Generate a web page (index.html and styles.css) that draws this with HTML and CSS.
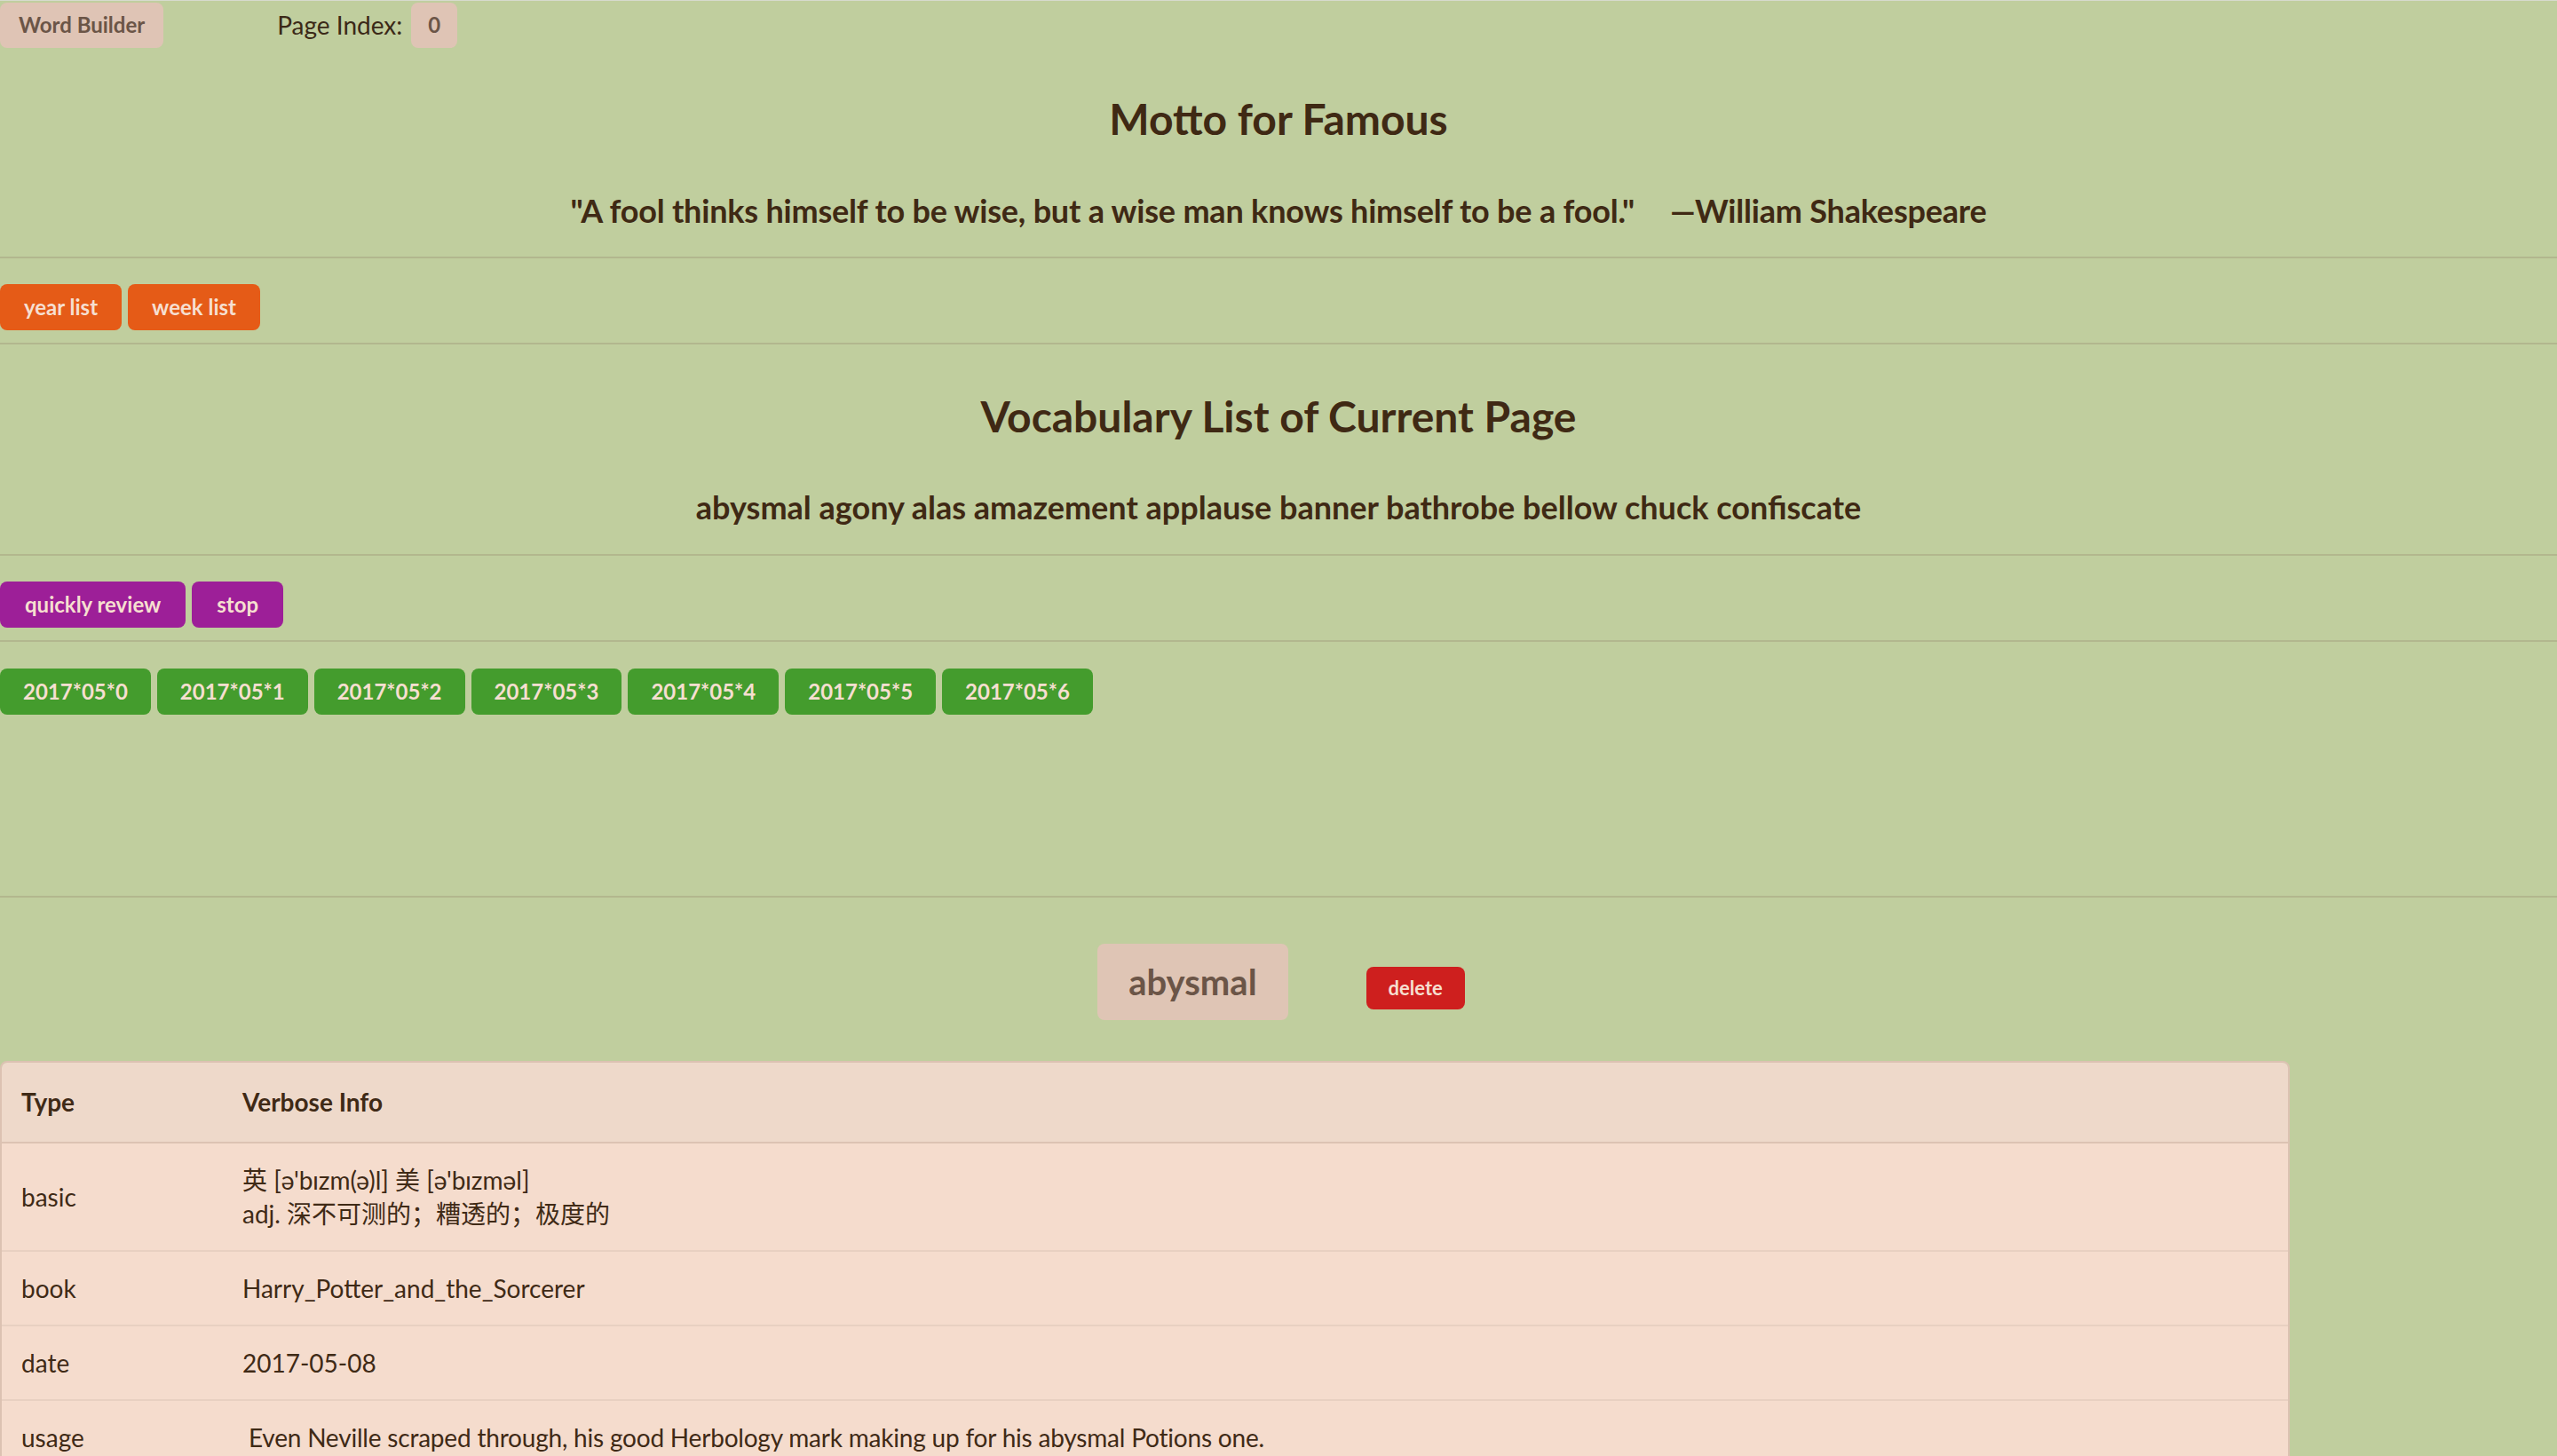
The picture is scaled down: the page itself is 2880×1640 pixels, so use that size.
FILE: index.html
```html
<!DOCTYPE html>
<html lang="en">
<head>
<meta charset="utf-8">
<title>Word Builder</title>
<link rel="stylesheet" href="styles.css">
</head>
<body>
<nav class="nav">
  <span class="brand">Word Builder</span>
  <span class="page-label">Page Index:</span>
  <span class="badge">0</span>
</nav>

<section class="center">
  <h1 class="title title-first">Motto for Famous</h1>
  <p class="lead lead-quote">"A fool thinks himself to be wise, but a wise man knows himself to be a fool."<span class="author">—William Shakespeare</span></p>
</section>
<hr class="rule rule-a">
<div class="btn-row">
  <button class="btn btn-orange">year list</button>
  <button class="btn btn-orange">week list</button>
</div>
<hr class="rule rule-b">

<section class="center">
  <h2 class="title title-second">Vocabulary List of Current Page</h2>
  <p class="lead lead-words">abysmal agony alas amazement applause banner bathrobe bellow chuck confiscate</p>
</section>
<hr class="rule rule-c">
<div class="btn-row">
  <button class="btn btn-purple">quickly review</button>
  <button class="btn btn-purple">stop</button>
</div>
<hr class="rule rule-b">
<div class="btn-row btn-row-dates">
  <button class="btn btn-green">2017*05*0</button>
  <button class="btn btn-green">2017*05*1</button>
  <button class="btn btn-green">2017*05*2</button>
  <button class="btn btn-green">2017*05*3</button>
  <button class="btn btn-green">2017*05*4</button>
  <button class="btn btn-green">2017*05*5</button>
  <button class="btn btn-green">2017*05*6</button>
</div>
<hr class="rule rule-d">

<div class="word-row">
  <span class="word">abysmal</span>
  <button class="btn-delete">delete</button>
</div>

<table class="info">
  <thead>
    <tr><th class="col-type">Type</th><th>Verbose Info</th></tr>
  </thead>
  <tbody>
    <tr><td>basic</td><td>英 [ə'bɪzm(ə)l] 美 [ə'bɪzməl]<br>adj. 深不可测的；糟透的；极度的</td></tr>
    <tr><td>book</td><td>Harry_Potter_and_the_Sorcerer</td></tr>
    <tr><td>date</td><td>2017-05-08</td></tr>
    <tr><td>usage</td><td class="usage">&nbsp;Even Neville scraped through, his good Herbology mark making up for his abysmal Potions one.</td></tr>
  </tbody>
</table>
</body>
</html>
```
FILE: styles.css
```css
html, body {
  margin: 0;
  padding: 0;
}
body {
  background: #c0ce9e;
  border-top: 1px solid #d7dace;
  font-family: Lato, "Noto Sans CJK SC", sans-serif;
  color: #3f2a16;
  min-height: 1640px;
}

/* nav */
.nav {
  display: flex;
  align-items: center;
  padding-top: 1px;
  height: 52px;
}
.brand {
  display: block;
  height: 51px;
  line-height: 50px;
  padding: 0 21px;
  background: #dfc4b5;
  color: #6b5547;
  font-size: 24px;
  font-weight: 700;
  border-radius: 8px;
}
.page-label {
  margin-left: 128px;
  font-size: 28px;
  line-height: 50px;
  color: #3b2917;
}
.badge {
  display: block;
  margin-left: 10px;
  height: 51px;
  line-height: 50px;
  padding: 0 19px;
  background: #dfc4b5;
  color: #6b5547;
  font-size: 24px;
  font-weight: 700;
  border-radius: 8px;
}

/* headings */
.center {
  text-align: center;
}
.title {
  margin: 0;
  font-size: 48px;
  line-height: 58px;
  font-weight: 700;
  color: #3f2914;
}
.title-first {
  margin-top: 51px;
}
.title-second {
  margin-top: 52px;
}
.lead {
  margin: 0;
  font-size: 36px;
  line-height: 44px;
  font-weight: 700;
  color: #3f2914;
}
.lead-quote {
  margin-top: 52px;
  letter-spacing: -0.2px;
}
.lead-words {
  margin-top: 51px;
}
.author {
  margin-left: 40px;
}

/* rules */
.rule {
  border: 0;
  height: 2px;
  margin: 0;
  background: #b2b78e;
}
.rule-a { margin-top: 30px; }
.rule-b { margin-top: 14px; }
.rule-c { margin-top: 31px; }
.rule-d { margin-top: 204px; }

/* buttons */
.btn-row {
  display: flex;
  gap: 7px;
  margin-top: 29px;
}
.btn-row-dates {
  margin-top: 30px;
}
.btn {
  border: 0;
  margin: 0;
  padding: 8px 27px;
  font-family: Lato, sans-serif;
  font-size: 24px;
  line-height: 36px;
  font-weight: 700;
  color: #f6dfd0;
  border-radius: 8px;
}
.btn-orange { background: #e55b17; }
.btn-purple { background: #9d1f98; padding: 8px 28px; }
.btn-green { background: #449c2d; padding: 8px 26px; }

/* word row */
.word-row {
  display: flex;
  justify-content: center;
  align-items: baseline;
  margin-top: 52px;
  padding-left: 6px;
}
.word {
  display: block;
  padding: 19px 35px;
  font-size: 40px;
  line-height: 48px;
  font-weight: 700;
  color: #6b5547;
  background: #dfc5b5;
  border-radius: 8px;
}
.btn-delete {
  margin-left: 88px;
  border: 0;
  padding: 8px 25px;
  font-family: Lato, sans-serif;
  font-size: 22px;
  line-height: 32px;
  font-weight: 700;
  color: #f6dfd0;
  background: #ce1f1e;
  border-radius: 8px;
}

/* table */
.info {
  margin-top: 46px;
  width: 2579px;
  border-collapse: separate;
  border-spacing: 0;
  border: 2px solid #dcc2b2;
  border-radius: 8px;
  overflow: hidden;
  font-size: 28px;
  line-height: 38px;
  color: #3f2a16;
}
.info th {
  text-align: left;
  font-weight: 700;
  padding: 25px 24px 26px 22px;
  background: #eed9ca;
  border-bottom: 2px solid #dcc3b3;
}
.info td {
  padding: 22px 24px 22px 22px;
  background: #f5dccd;
  border-bottom: 2px solid #e8d0c1;
  vertical-align: middle;
}
.info .col-type {
  width: 203px;
}
.info .usage {
  letter-spacing: -0.2px;
}
```
